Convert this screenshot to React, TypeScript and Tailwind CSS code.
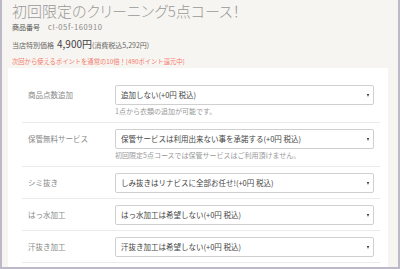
import React from 'react';

const rows = [
  { label: '商品点数追加', value: '追加しない(+0円 税込)', note: '1点から衣類の追加が可能です。' },
  { label: '保管無料サービス', value: '保管サービスは利用出来ない事を承諾する(+0円 税込)', note: '初回限定5点コースでは保管サービスはご利用頂けません。' },
  { label: 'シミ抜き', value: 'しみ抜きはリナビスに全部お任せ!(+0円 税込)' },
  { label: 'はっ水加工', value: 'はっ水加工は希望しない(+0円 税込)' },
  { label: '汗抜き加工', value: '汗抜き加工は希望しない(+0円 税込)' },
  { label: '', value: '' },
];

function FakeSelect({ value }: { value: string }) {
  return (
    <div className="h-[20px] border border-[#cfcfcf] rounded-[2px] bg-white flex items-center justify-between pl-[5px] pr-[4px]">
      <span className="text-[7.5px] text-[#444] whitespace-nowrap">{value}</span>
      <span className="w-0 h-0 border-x-[1.5px] border-x-transparent border-t-[3px] border-t-[#222]" />
    </div>
  );
}

export default function App() {
  return (
    <div className="w-[400px] h-[269px] overflow-hidden bg-[#f7f5f1] border-x-2 border-b-2 border-[#bdb9c9] font-['Noto_Sans_CJK_JP',sans-serif]">
      {/* header */}
      <div className="pl-[10px]">
        <h1 className="pt-[2px] text-[15px] leading-[18px] font-light text-[#999] [font-feature-settings:'palt']">
          初回限定のクリーニング5点コース！
        </h1>
        <div className="mt-[2px] flex items-center gap-[8px] leading-[10px]">
          <span className="text-[7px] text-[#555]">商品番号</span>
          <span className="text-[7.5px] tracking-[0.6px] text-[#888]">cl-05f-160910</span>
        </div>
        <div className="mt-[5px] flex items-baseline leading-[14px]">
          <span className="text-[7px] text-[#666]">当店特別価格</span>
          <span className="ml-[3px] text-[10px] text-[#444]">4,900円</span>
          <span className="text-[7px] text-[#666]">(消費税込5,292円)</span>
        </div>
        <p className="mt-[5px] leading-[10px] text-[6.3px] text-[#f47a6c]">
          次回から使えるポイントを通常の10倍！[490ポイント還元中]
        </p>
      </div>

      {/* options panel */}
      <div className="mt-[1px] ml-[6px] w-[380px] h-full bg-white pl-[14px] pr-[8px] pt-[11px]">
        {rows.map((r, i) => (
          <div key={i} className="flex border-b border-[#ebebeb] pt-[6px] pb-[5px]">
            <div className="w-[93px] pl-[6px] leading-[20px] text-[7.5px] text-[#888]">{r.label}</div>
            <div className="w-[259px]">
              <FakeSelect value={r.value} />
              {r.note && (
                <p className="mt-[1px] leading-[11px] text-[7px] text-[#999] whitespace-nowrap">{r.note}</p>
              )}
            </div>
          </div>
        ))}
      </div>
    </div>
  );
}
